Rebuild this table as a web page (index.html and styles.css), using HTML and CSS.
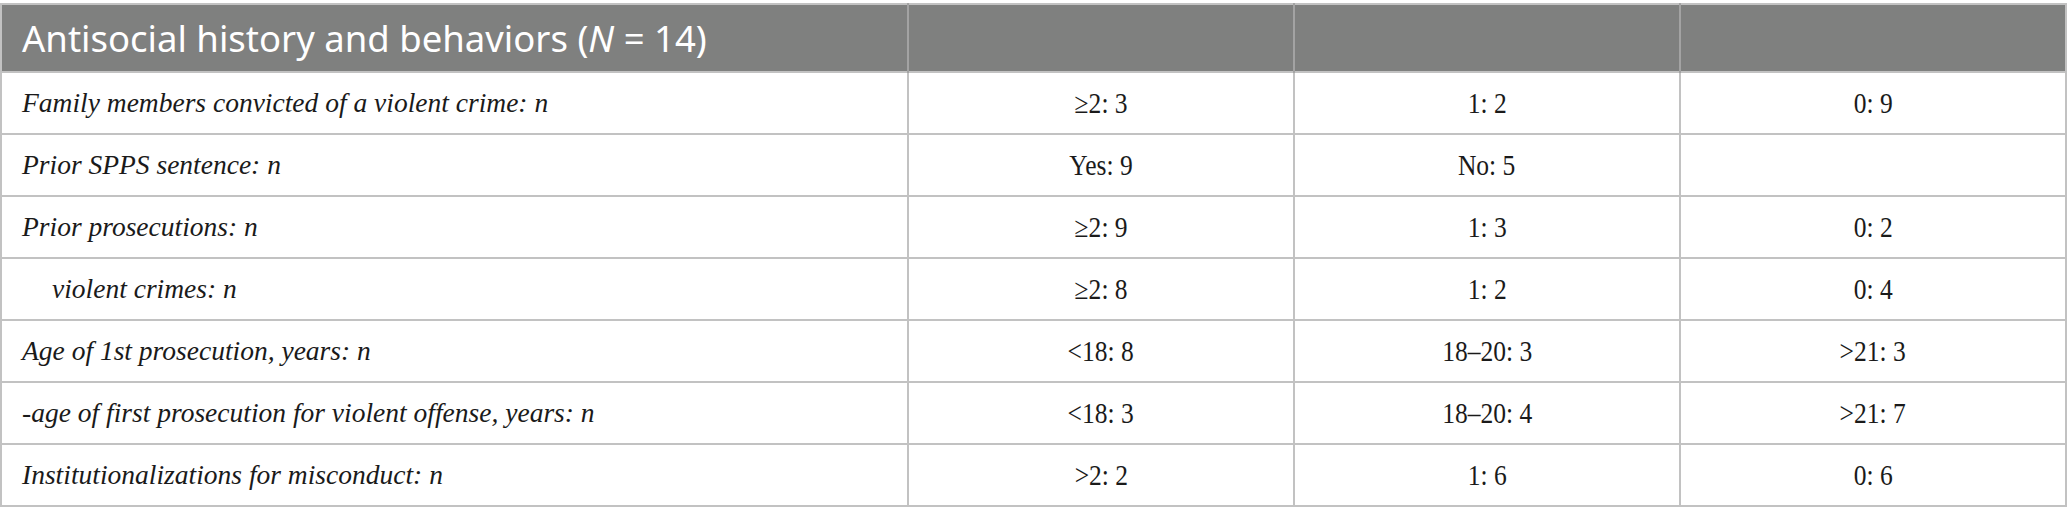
FILE: index.html
```html
<!DOCTYPE html>
<html lang="en">
<head>
<meta charset="utf-8">
<title>Antisocial history and behaviors</title>
<link rel="stylesheet" href="styles.css">
</head>
<body>
<div class="wrap">
<table class="data-table">
  <colgroup>
    <col class="col-label">
    <col class="col-val">
    <col class="col-val">
    <col class="col-val">
  </colgroup>
  <thead>
    <tr>
      <th class="head-title">Antisocial history and behaviors (<i>N</i> = 14)</th>
      <th></th>
      <th></th>
      <th></th>
    </tr>
  </thead>
  <tbody>
    <tr>
      <td class="label">Family members convicted of a violent crime: n</td>
      <td class="val"><span>&ge;2: 3</span></td>
      <td class="val"><span>1: 2</span></td>
      <td class="val"><span>0: 9</span></td>
    </tr>
    <tr>
      <td class="label">Prior SPPS sentence: n</td>
      <td class="val"><span>Yes: 9</span></td>
      <td class="val"><span>No: 5</span></td>
      <td class="val"></td>
    </tr>
    <tr>
      <td class="label">Prior prosecutions: n</td>
      <td class="val"><span>&ge;2: 9</span></td>
      <td class="val"><span>1: 3</span></td>
      <td class="val"><span>0: 2</span></td>
    </tr>
    <tr>
      <td class="label indent">violent crimes: n</td>
      <td class="val"><span>&ge;2: 8</span></td>
      <td class="val"><span>1: 2</span></td>
      <td class="val"><span>0: 4</span></td>
    </tr>
    <tr>
      <td class="label">Age of 1st prosecution, years: n</td>
      <td class="val"><span>&lt;18: 8</span></td>
      <td class="val"><span>18&ndash;20: 3</span></td>
      <td class="val"><span>&gt;21: 3</span></td>
    </tr>
    <tr>
      <td class="label">-age of first prosecution for violent offense, years: n</td>
      <td class="val"><span>&lt;18: 3</span></td>
      <td class="val"><span>18&ndash;20: 4</span></td>
      <td class="val"><span>&gt;21: 7</span></td>
    </tr>
    <tr>
      <td class="label">Institutionalizations for misconduct: n</td>
      <td class="val"><span>&gt;2: 2</span></td>
      <td class="val"><span>1: 6</span></td>
      <td class="val"><span>0: 6</span></td>
    </tr>
  </tbody>
</table>
</div>
</body>
</html>
```
FILE: styles.css
```css
html, body {
  margin: 0;
  padding: 0;
  background: #ffffff;
}

.wrap {
  padding-top: 3px;
  width: 2067px;
}

.data-table {
  width: 2066px;
  border-collapse: collapse;
  table-layout: fixed;
  border: 2px solid #c2c2c2;
}

.col-label { width: 907px; }
.col-val { width: 386px; }

.data-table th {
  background: #7f807f;
  height: 66px;
  padding: 0 0 0 20px;
  text-align: left;
  border-left: 2px solid #a3a3a3;
  font-family: "Noto Sans", "Open Sans", sans-serif;
  font-weight: 400;
  font-size: 36.5px;
  color: #ffffff;
}

.data-table th:first-child { border-left: none; }

.data-table td {
  height: 60px;
  padding: 0;
  border: 2px solid #c2c2c2;
  color: #1a1a1a;
}

.label {
  font-family: "Liberation Serif", "Times New Roman", serif;
  font-style: italic;
  font-size: 27.5px;
  padding-left: 20px !important;
}

.label.indent {
  padding-left: 50px !important;
}

.val {
  text-align: center;
  font-family: "Liberation Serif", "Times New Roman", serif;
  font-size: 29px;
}

.val span {
  display: inline-block;
  transform: scaleX(0.88);
}
```
